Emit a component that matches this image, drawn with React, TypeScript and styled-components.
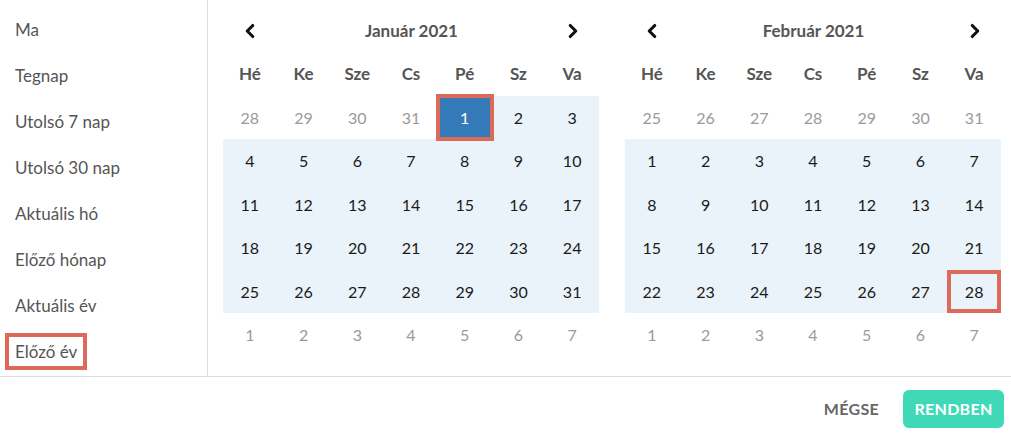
import { createGlobalStyle } from "styled-components";
import styled from "styled-components";
import { ChevronLeft, ChevronRight } from "lucide-react";

const GlobalStyle = createGlobalStyle`
  body {
    margin: 0;
    background: #fff;
    font-family: Lato, "Open Sans", sans-serif;
  }
`;

const Picker = styled.div`
  width: 1011px;
  height: 440px;
  display: flex;
  flex-direction: column;
`;

const Body = styled.div`
  display: flex;
  height: 377px;
  border-bottom: 1px solid #dcdcdc;
  box-sizing: border-box;
`;

const Sidebar = styled.ul`
  width: 208px;
  margin: 0;
  padding: 6px 0 0 5px;
  list-style: none;
  border-right: 1px solid #dcdcdc;
  box-sizing: border-box;
`;

const Preset = styled.li`
  height: 46px;
  display: flex;
  align-items: center;
`;

const PresetLabel = styled.span<{ $active?: boolean }>`
  display: inline-flex;
  align-items: center;
  height: 37px;
  padding: 0 6px;
  box-sizing: border-box;
  border: 4px solid ${(p) => (p.$active ? "#dc6a5b" : "transparent")};
  font-size: 17px;
  color: #555;
`;

const Calendars = styled.div`
  display: flex;
  gap: 26px;
  padding: 9px 0 0 15px;
`;

const Month = styled.div`
  width: 376px;
`;

const MonthHeader = styled.div`
  height: 43px;
  display: flex;
  align-items: center;
  justify-content: space-between;
  padding: 0 15px 0 16px;
  font-size: 17px;
  font-weight: 700;
  color: #555;
`;

const NavButton = styled.button`
  border: 0;
  background: none;
  padding: 0;
  display: flex;
  color: #111;
  cursor: pointer;
`;

const Grid = styled.div`
  display: grid;
  grid-template-columns: repeat(7, 1fr);
  grid-auto-rows: 43.5px;
`;

const WeekDay = styled.div`
  display: flex;
  align-items: center;
  justify-content: center;
  height: 44px;
  padding-bottom: 2px;
  box-sizing: border-box;
  font-size: 17px;
  font-weight: 700;
  color: #555;
`;

const Day = styled.div<{ $muted?: boolean; $inRange?: boolean; $selected?: boolean; $focus?: boolean }>`
  position: relative;
  display: flex;
  align-items: center;
  justify-content: center;
  font-size: 16px;
  color: ${(p) => (p.$selected ? "#fff" : p.$muted ? "#9a9a9a" : "#1a1a1a")};
  background: ${(p) => (p.$selected ? "#357ab8" : p.$inRange ? "#eaf3f9" : "transparent")};
  box-shadow: ${(p) => (p.$focus ? "inset 0 0 0 4px #dc6a5b" : "none")};
  ${(p) => (p.$selected ? "z-index: 1; box-shadow: 0 0 0 2px #dc6a5b, inset 0 0 0 2px #dc6a5b;" : "")}
`;

const Footer = styled.div`
  flex: 1;
  display: flex;
  align-items: center;
  justify-content: flex-end;
  gap: 24px;
  padding-right: 7px;
`;

const TextButton = styled.button`
  border: 0;
  background: none;
  font-family: inherit;
  font-size: 16px;
  font-weight: 700;
  color: #666;
  letter-spacing: 0.3px;
  padding: 0;
`;

const PrimaryButton = styled.button`
  border: 0;
  background: #3fd9b8;
  color: #fff;
  font-family: inherit;
  font-size: 16px;
  font-weight: 700;
  letter-spacing: 0.3px;
  height: 38px;
  width: 101px;
  border-radius: 6px;
`;

const weekDays = ["Hé", "Ke", "Sze", "Cs", "Pé", "Sz", "Va"];

type Cell = { n: number; muted: boolean };

function buildMonth(prevDays: number[], count: number, nextCount: number): Cell[] {
  const cells: Cell[] = prevDays.map((n) => ({ n, muted: true }));
  for (let i = 1; i <= count; i++) cells.push({ n: i, muted: false });
  for (let i = 1; i <= nextCount; i++) cells.push({ n: i, muted: true });
  return cells;
}

const months = [
  { title: "Január 2021", cells: buildMonth([28, 29, 30, 31], 31, 7), selected: 1, focus: -1 },
  { title: "Február 2021", cells: buildMonth([25, 26, 27, 28, 29, 30, 31], 28, 7), selected: -1, focus: 28 },
];

const presets = ["Ma", "Tegnap", "Utolsó 7 nap", "Utolsó 30 nap", "Aktuális hó", "Előző hónap", "Aktuális év", "Előző év"];

export default function App() {
  return (
    <Picker>
      <GlobalStyle />
      <Body>
        <Sidebar>
          {presets.map((p, i) => (
            <Preset key={p}>
              <PresetLabel $active={i === presets.length - 1}>{p}</PresetLabel>
            </Preset>
          ))}
        </Sidebar>
        <Calendars>
          {months.map((m) => (
            <Month key={m.title}>
              <MonthHeader>
                <NavButton>
                  <ChevronLeft size={22} strokeWidth={3.4} />
                </NavButton>
                <span>{m.title}</span>
                <NavButton>
                  <ChevronRight size={22} strokeWidth={3.4} />
                </NavButton>
              </MonthHeader>
              <Grid>
                {weekDays.map((d) => (
                  <WeekDay key={d}>{d}</WeekDay>
                ))}
                {m.cells.map((c, i) => (
                  <Day
                    key={i}
                    $muted={c.muted}
                    $inRange={!c.muted}
                    $selected={!c.muted && c.n === m.selected}
                    $focus={!c.muted && c.n === m.focus}
                  >
                    {c.n}
                  </Day>
                ))}
              </Grid>
            </Month>
          ))}
        </Calendars>
      </Body>
      <Footer>
        <TextButton>MÉGSE</TextButton>
        <PrimaryButton>RENDBEN</PrimaryButton>
      </Footer>
    </Picker>
  );
}
